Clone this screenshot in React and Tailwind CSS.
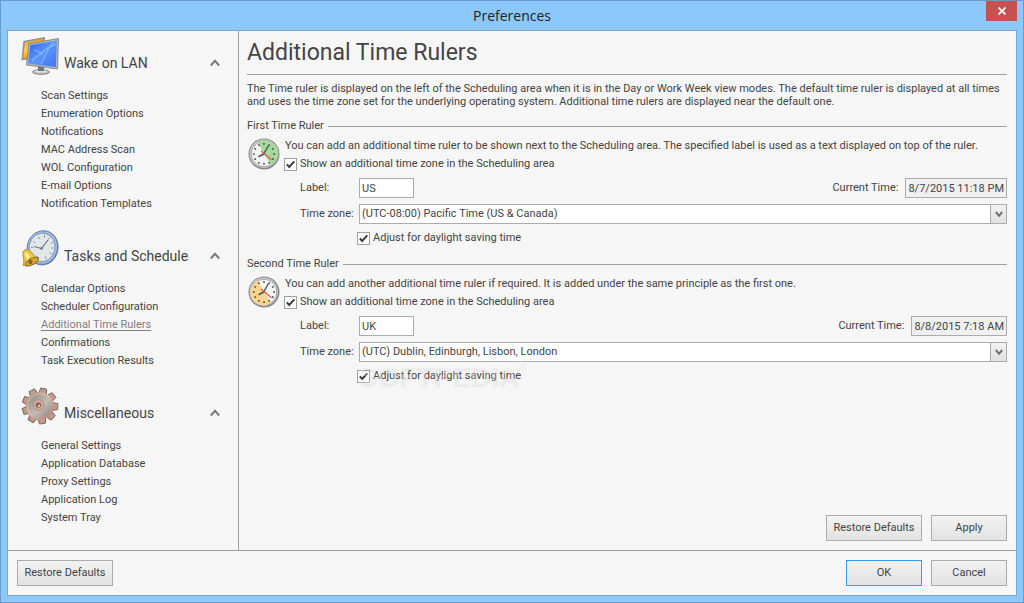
import React, { useState } from 'react';

const NAV = [
  {
    title: 'Wake on LAN',
    icon: MonitorsIcon,
    items: ['Scan Settings', 'Enumeration Options', 'Notifications', 'MAC Address Scan', 'WOL Configuration', 'E-mail Options', 'Notification Templates'],
  },
  {
    title: 'Tasks and Schedule',
    icon: ClockBellIcon,
    items: ['Calendar Options', 'Scheduler Configuration', 'Additional Time Rulers', 'Confirmations', 'Task Execution Results'],
  },
  {
    title: 'Miscellaneous',
    icon: GearIcon,
    items: ['General Settings', 'Application Database', 'Proxy Settings', 'Application Log', 'System Tray'],
  },
];

const ZONES = [
  '(UTC-08:00) Pacific Time (US & Canada)',
  '(UTC) Dublin, Edinburgh, Lisbon, London',
];

function MonitorsIcon() {
  return (
    <svg viewBox="0 0 40 40" className="size-10 shrink-0" aria-hidden="true">
      <defs>
        <linearGradient id="mon-blue" x1="0" y1="0" x2="1" y2="1">
          <stop offset="0" stopColor="#2f62e6" />
          <stop offset="0.5" stopColor="#5a96fb" />
          <stop offset="1" stopColor="#3c74f0" />
        </linearGradient>
        <linearGradient id="mon-gold" x1="0" y1="0" x2="0" y2="1">
          <stop offset="0" stopColor="#f0a41c" />
          <stop offset="0.6" stopColor="#ffd34d" />
          <stop offset="1" stopColor="#f29b10" />
        </linearGradient>
      </defs>
      <path d="M2.800 6.300 23.500 2.500v19L0.800 25z" fill="#9a9a9a" stroke="#777" strokeWidth="0.6" />
      <path d="M4 7.600 22.300 4v17L2.200 23.500z" fill="url(#mon-gold)" />
      <ellipse cx="20" cy="37" rx="8.500" ry="2.400" fill="#b9bcbe" stroke="#77797b" strokeWidth="0.800" />
      <ellipse cx="20" cy="36.300" rx="6.500" ry="1.300" fill="#dcdfe0" />
      <path d="M17 31h6v5h-6z" fill="#717477" />
      <path d="M7.800 8.800 37.500 3.500 36.500 34 5.500 30z" fill="#b4b6b8" stroke="#777a7d" strokeWidth="0.800" />
      <path d="M9.200 10.200 35.800 5.500 34.900 32 7.200 28.400z" fill="url(#mon-blue)" />
      <path d="M11 26c5-7 8-5 12-10s7-3 12-7M20 29c2-5 3-6 5-10s3-9 8-12M13 15c4 1 6 3 9 3" fill="none" stroke="#c3e0ff" strokeWidth="1.300" opacity="0.400" />
    </svg>
  );
}

function ClockBellIcon() {
  return (
    <svg viewBox="0 0 40 40" className="size-10 shrink-0" aria-hidden="true">
      <ellipse cx="22" cy="20" rx="15.500" ry="17.500" transform="rotate(14 22 20)" fill="#6d82ac" />
      <ellipse cx="21.300" cy="19.600" rx="15.300" ry="17" transform="rotate(14 21.300 19.600)" fill="#9fbcec" stroke="#66758f" strokeWidth="0.800" />
      <ellipse cx="21" cy="19.500" rx="13" ry="14.500" transform="rotate(14 21 19.500)" fill="#e1e6e8" stroke="#7388ae" strokeWidth="0.800" />
      <g stroke="#87909a" strokeWidth="1">
        <path d="M23.500 7v2.500M28.700 9.500l-1.200 2M32 14.500l-2 1M32.500 20h-2.200M30.500 26l-1.900-1.200M25 30.500l-.8-2M17.500 9l1 2M12.500 13.500l1.600 1.400M10 19.500h2.200" />
        <path d="M20.500 20.500 27 12M20.500 20.500 13 18.500" stroke="#687381" strokeWidth="1.200" />
      </g>
      <circle cx="20.500" cy="20.500" r="1.300" fill="#68727e" />
      <path d="M2 24C4 20 9 21.500 11 25c2 2.600 3.500 4 6.200 4.200L17 32 6 38l-4-.8C4 33 1.500 29 2 25z" fill="#ebc53d" stroke="#978047" strokeWidth="0.800" />
      <path d="M3.500 25.500c2-2 4 0 5.500 3L6 34C6.500 30 3.500 28.500 3.500 25.500z" fill="#fff196" />
      <ellipse cx="11" cy="33.700" rx="7.300" ry="3.100" transform="rotate(-28 11 33.700)" fill="#d7a62b" stroke="#7c6838" strokeWidth="0.900" />
      <circle cx="9.500" cy="34" r="2" fill="#806128" />
    </svg>
  );
}

function GearIcon() {
  const teeth = [0, 40, 80, 120, 160, 200, 240, 280, 320];
  return (
    <svg viewBox="0 0 40 40" className="size-10 shrink-0" aria-hidden="true">
      <defs>
        <linearGradient id="gear-body" x1="0" y1="0" x2="1" y2="1">
          <stop offset="0" stopColor="#a7968d" />
          <stop offset="0.450" stopColor="#d8bdae" />
          <stop offset="1" stopColor="#ad7763" />
        </linearGradient>
        <linearGradient id="gear-disc" x1="0" y1="0" x2="1" y2="1">
          <stop offset="0" stopColor="#8f8b88" />
          <stop offset="0.550" stopColor="#c2bcb7" />
          <stop offset="1" stopColor="#8c837e" />
        </linearGradient>
      </defs>
      <g transform="rotate(12 19 21)">
        {teeth.map((a) => (
          <path key={a} d="M15 9 16 3.200h6L23 9z" transform={`rotate(${a} 19 21)`} fill="#bd9b8b" stroke="#77655d" strokeWidth="0.900" />
        ))}
      </g>
      <circle cx="19" cy="21" r="13.800" fill="url(#gear-body)" />
      <circle cx="19" cy="21" r="11.300" fill="url(#gear-disc)" />
      <circle cx="17.500" cy="20" r="5.500" fill="#d2a692" stroke="#a58a7e" strokeWidth="0.800" />
      <circle cx="17.500" cy="20" r="2.600" fill="#75625a" />
      <circle cx="18" cy="20.700" r="1.200" fill="#d9c9be" />
    </svg>
  );
}

function RulerClock({ variant }) {
  const hours = [0, 30, 60, 90, 120, 150, 180, 210, 240, 270, 300, 330];
  const green = variant === 'green';
  return (
    <svg viewBox="0 0 32 32" className="size-8 shrink-0" aria-hidden="true">
      <circle cx="16" cy="16" r="15.500" fill="#8a8a8a" />
      <circle cx="15.700" cy="15.700" r="14.200" fill="#c9cbcb" />
      <circle cx="16" cy="16" r="12.800" fill="#f4f6f6" stroke="#8b8e8d" strokeWidth="0.700" />
      {green ? (
        <path d="M16 16 10 4.800A12.800 12.800 0 1 1 23 26.700z" fill="#a6d99a" />
      ) : (
        <path d="M16 16 10 4.800A12.800 12.800 0 1 0 23 26.700z" fill="#fcd68f" />
      )}
      {hours.map((a) => (
        <path key={a} d="M16 4.900v1.800" transform={`rotate(${a} 16 16)`} stroke="#444" strokeWidth="1.500" />
      ))}
      <path d="M15 17 20.500 7.500" stroke="#4a5551" strokeWidth="1.400" />
      <path d="M16.500 15.500 10.500 18.700" stroke="#4a5551" strokeWidth="1.700" />
      <path d="M13 13 23.500 21.800" stroke="#e8524d" strokeWidth="1.200" />
    </svg>
  );
}

function Check({ id, label, checked, onChange }) {
  return (
    <div className="flex h-4 items-center gap-[3px]">
      <span className="relative flex size-[13px] shrink-0">
        <input
          id={id}
          type="checkbox"
          checked={checked}
          onChange={(e) => onChange(e.target.checked)}
          className="size-[13px] appearance-none border border-[#a0a0a0] bg-white"
        />
        {checked && (
          <svg viewBox="0 0 13 13" className="pointer-events-none absolute inset-0 size-[13px]" aria-hidden="true">
            <path d="M2.800 6.300 5.200 9 10.300 3.300" fill="none" stroke="#3c3c3c" strokeWidth="2" />
          </svg>
        )}
      </span>
      <label htmlFor={id} className="leading-[18px]">{label}</label>
    </div>
  );
}

function Button({ children, primary, wide }) {
  return (
    <button
      type="button"
      className={`h-[26px] border bg-linear-to-b from-[#f2f2f2] to-[#e3e3e3] pt-px text-center hover:to-[#d8e8f6] ${primary ? 'border-[#3399ff]' : 'border-[#acacac]'} ${wide ? 'w-24' : 'w-19'}`}
    >
      {children}
    </button>
  );
}

function TimeRuler({ id, title, description, variant, initialLabel, initialZone, now, watermark }) {
  const [enabled, setEnabled] = useState(true);
  const [label, setLabel] = useState(initialLabel);
  const [zone, setZone] = useState(initialZone);
  const [daylight, setDaylight] = useState(true);

  return (
    <section className="mt-[10px]">
      <div className="flex h-4 items-center gap-1">
        <h2 className="leading-[18px]">{title}</h2>
        <div className="h-px flex-1 bg-[#a0a0a0]" />
      </div>
      <div className="mt-[3px] flex">
        <div className="w-[37px] shrink-0 pt-px pl-px">
          <RulerClock variant={variant} />
        </div>
        <div className="min-w-0 flex-1">
          <p className="mb-px pl-px leading-[18px]">{description}</p>
          <Check id={`${id}-show`} label="Show an additional time zone in the Scheduling area" checked={enabled} onChange={setEnabled} />
          <div className="mt-[6px] flex flex-col gap-[6px] pl-4">
            <div className="flex h-5 items-center">
              <label htmlFor={`${id}-label`} className="w-[59px] leading-[18px]">Label:</label>
              <input
                id={`${id}-label`}
                type="text"
                value={label}
                onChange={(e) => setLabel(e.target.value)}
                className="h-5 w-[55px] border border-[#acacac] bg-white px-0.5"
              />
              <label htmlFor={`${id}-now`} className="mr-[7px] ml-auto leading-[18px]">Current Time:</label>
              <input
                id={`${id}-now`}
                type="text"
                readOnly
                value={now}
                className="field-sizing-content h-5 border border-[#acacac] bg-[#f0f0f0] px-0.5"
              />
            </div>
            <div className="flex h-5 items-center">
              <label htmlFor={`${id}-zone`} className="w-[59px] shrink-0 leading-[18px]">Time zone:</label>
              <div className="relative flex-1">
                <select
                  id={`${id}-zone`}
                  value={zone}
                  onChange={(e) => setZone(e.target.value)}
                  className="block h-5 w-full appearance-none border border-[#acacac] bg-white px-0.5 pt-px"
                >
                  {ZONES.map((z) => (
                    <option key={z}>{z}</option>
                  ))}
                </select>
                <span className="pointer-events-none absolute top-0 right-0 flex h-5 w-[17px] items-center justify-center border border-[#acacac] bg-linear-to-b from-[#f2f2f2] to-[#e0e0e0]">
                  <svg viewBox="0 0 8 7" className="h-[7px] w-2" aria-hidden="true">
                    <path d="M0.800 1 4 4.800 7.200 1" fill="none" stroke="#6e6e6e" strokeWidth="2" />
                  </svg>
                </span>
              </div>
            </div>
            <div className="relative pl-[57px]">
              <Check id={`${id}-dst`} label="Adjust for daylight saving time" checked={daylight} onChange={setDaylight} />
              {watermark && <Watermark />}
            </div>
          </div>
        </div>
      </div>
    </section>
  );
}

function Watermark() {
  return (
    <div
      aria-hidden="true"
      className="pointer-events-none absolute -top-2 left-[58px] flex items-start font-['Liberation_Sans',sans-serif] text-[28px] leading-8 font-bold text-[#f7f7f7]/30 text-shadow-[1px_2px_2px_rgb(0_0_0/0.06)]"
    >
      SOFTPEDIA<span className="text-[10px] leading-3 font-normal">®</span>
    </div>
  );
}

function NavGroup({ group, active, onSelect }) {
  const [open, setOpen] = useState(true);
  const Icon = group.icon;
  return (
    <div className="mb-[15px]">
      <button
        type="button"
        aria-expanded={open}
        onClick={() => setOpen(!open)}
        className="flex h-10 w-full items-end gap-[3px] text-left"
      >
        <Icon />
        <span className="flex-1 text-[14px] leading-6">{group.title}</span>
        <svg viewBox="0 0 10 24" className="h-6 w-[10px]" aria-hidden="true">
          <path d="M0.800 14.500 5 9.800 9.200 14.500" fill="none" stroke="#7a7a7a" strokeWidth="2" />
        </svg>
      </button>
      {open && (
        <ul className="mt-3 pl-5">
          {group.items.map((item) => (
            <li key={item} className="h-[18px] leading-[18px]">
              <a
                href="#"
                aria-current={item === active ? 'page' : undefined}
                onClick={(e) => {
                  e.preventDefault();
                  onSelect(item);
                }}
                className={item === active ? 'text-[#808080] underline underline-offset-2' : 'hover:underline'}
              >
                {item}
              </a>
            </li>
          ))}
        </ul>
      )}
    </div>
  );
}

export default function App() {
  const [active, setActive] = useState('Additional Time Rulers');

  return (
    <div className="flex min-h-screen flex-col border border-[#6a9bc9] bg-[#8cc8fb] px-[6px] pb-[6px] font-[Roboto,sans-serif] text-[11px] text-[#444]">
      {/* Title bar */}
      <header className="relative h-[29px] shrink-0">
        <h1 className="text-center font-['Open_Sans',sans-serif] text-[14px] leading-[29px] text-[#222]">Preferences</h1>
        <button type="button" aria-label="Close" className="absolute top-0 right-0 flex h-5 w-[31px] items-center justify-center bg-[#c75050]">
          <svg viewBox="0 0 8 8" className="size-2" aria-hidden="true">
            <path d="M0.500 0.500 7.500 7.500M7.500 0.500 0.500 7.500" stroke="#fff" strokeWidth="1.700" />
          </svg>
        </button>
      </header>

      <div className="flex flex-1 flex-col border border-[#78a9d6] bg-[#f6f6f6]">
        <div className="flex flex-1">
          <nav className="w-[231px] shrink-0 border-r border-[#a0a0a0] pt-1 pr-[18px] pl-[13px]">
            {NAV.map((group) => (
              <NavGroup key={group.title} group={group} active={active} onSelect={setActive} />
            ))}
          </nav>

          <main className="flex min-w-0 flex-1 flex-col pr-[9px] pb-[9px] pl-2">
            <h2 className="border-b border-[#a0a0a0] text-[23px] leading-[43px]">Additional Time Rulers</h2>
            <p className="pt-[7px] leading-[13px]">
              The Time ruler is displayed on the left of the Scheduling area when it is in the Day or Work Week view modes. The default time ruler is displayed at all times and uses the time zone set for the underlying operating system. Additional time rulers are displayed near the default one.
            </p>
            <TimeRuler
              id="first"
              title="First Time Ruler"
              description="You can add an additional time ruler to be shown next to the Scheduling area. The specified label is used as a text displayed on top of the ruler."
              variant="green"
              initialLabel="US"
              initialZone={ZONES[0]}
              now="8/7/2015 11:18 PM"
            />
            <TimeRuler
              id="second"
              title="Second Time Ruler"
              description="You can add another additional time ruler if required. It is added under the same principle as the first one."
              variant="orange"
              initialLabel="UK"
              initialZone={ZONES[1]}
              now="8/8/2015 7:18 AM"
              watermark
            />
            <div className="mt-auto flex justify-end gap-[9px]">
              <Button wide>Restore Defaults</Button>
              <Button>Apply</Button>
            </div>
          </main>
        </div>

        <footer className="flex gap-[9px] border-t border-[#a0a0a0] p-[9px]">
          <Button wide>Restore Defaults</Button>
          <span className="flex-1" />
          <Button primary>OK</Button>
          <Button>Cancel</Button>
        </footer>
      </div>
    </div>
  );
}
